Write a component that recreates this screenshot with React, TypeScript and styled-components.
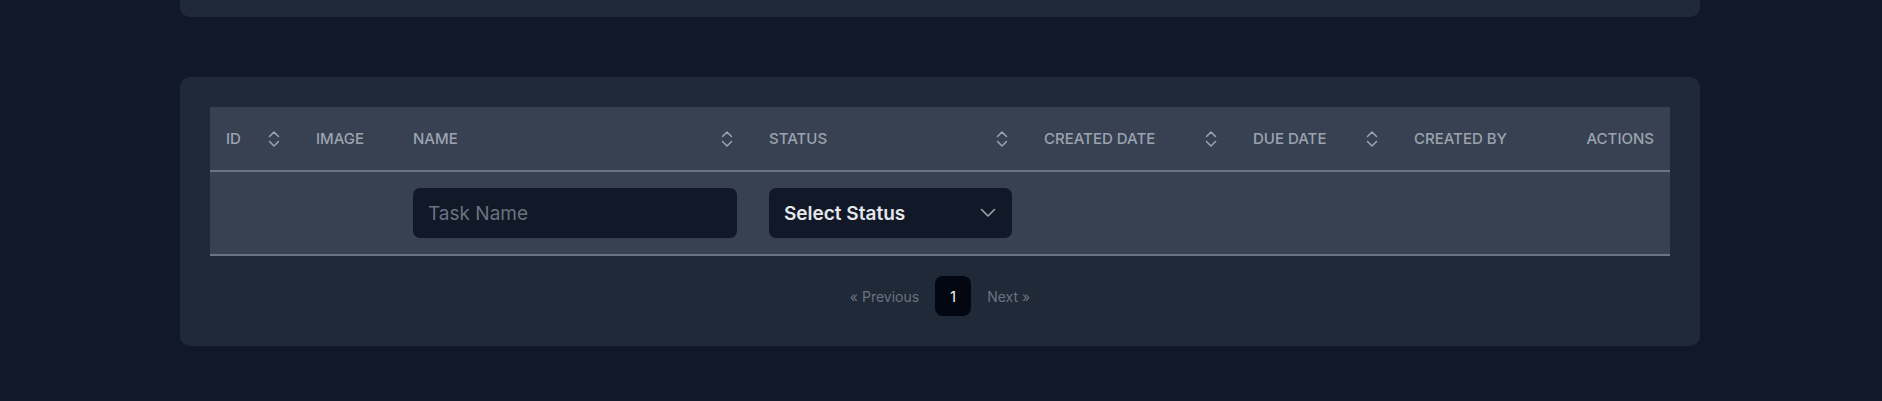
import styled, { createGlobalStyle } from "styled-components";

const GlobalStyle = createGlobalStyle`
  body {
    margin: 0;
    background: #111827;
    font-family: Inter, "Noto Sans", sans-serif;
  }
`;

interface Column {
  label: string;
  width: number;
  sortable?: boolean;
  align?: "left" | "right";
}

const columns: Column[] = [
  { label: "ID", width: 90, sortable: true },
  { label: "Image", width: 97 },
  { label: "Name", width: 356, sortable: true },
  { label: "Status", width: 275, sortable: true },
  { label: "Created Date", width: 209, sortable: true },
  { label: "Due Date", width: 161, sortable: true },
  { label: "Created By", width: 140 },
  { label: "Actions", width: 132, align: "right" },
];

function SortIcon() {
  return (
    <svg width="20" height="20" viewBox="0 0 20 20" fill="none" stroke="currentColor" strokeWidth="1.5" strokeLinecap="round" strokeLinejoin="round">
      <path d="M5.5 7.5 L10 3 L14.5 7.5" />
      <path d="M5.5 12.5 L10 17 L14.5 12.5" />
    </svg>
  );
}

function ChevronDown() {
  return (
    <svg width="16" height="16" viewBox="0 0 16 16" fill="none" stroke="currentColor" strokeWidth="1.6" strokeLinecap="round" strokeLinejoin="round">
      <path d="M1.5 4.5 L8 11 L14.5 4.5" />
    </svg>
  );
}

function App() {
  return (
    <Page>
      <GlobalStyle />
      <TopCard />
      <Card>
        <Table>
          <colgroup>
            {columns.map((c) => (
              <col key={c.label} style={{ width: c.width }} />
            ))}
          </colgroup>
          <thead>
            <HeadRow>
              {columns.map((c) => (
                <HeadCell key={c.label} $align={c.align}>
                  <HeadInner $align={c.align}>
                    <span>{c.label}</span>
                    {c.sortable && <SortIcon />}
                  </HeadInner>
                </HeadCell>
              ))}
            </HeadRow>
          </thead>
          <tbody>
            <FilterRow>
              <FilterCell />
              <FilterCell />
              <FilterCell>
                <TextInput placeholder="Task Name" />
              </FilterCell>
              <FilterCell>
                <SelectBox>
                  <span>Select Status</span>
                  <ChevronDown />
                </SelectBox>
              </FilterCell>
              <FilterCell />
              <FilterCell />
              <FilterCell />
              <FilterCell />
            </FilterRow>
          </tbody>
        </Table>
        <Pagination>
          <PageLink>« Previous</PageLink>
          <PageNumber>1</PageNumber>
          <PageLink>Next »</PageLink>
        </Pagination>
      </Card>
    </Page>
  );
}

const Page = styled.div`
  width: 1520px;
  margin-left: 180px;
  display: flex;
  flex-direction: column;
  gap: 60px;
  padding-bottom: 55px;
`;

const TopCard = styled.div`
  height: 17px;
  background: #1f2937;
  border-radius: 0 0 10px 10px;
`;

const Card = styled.div`
  background: #1f2937;
  border-radius: 10px;
  padding: 30px;
`;

const Table = styled.table`
  width: 100%;
  table-layout: fixed;
  border-collapse: collapse;
  background: #374151;
`;

const HeadRow = styled.tr`
  height: 64px;
  border-bottom: 2px solid #6b7280;
`;

const HeadCell = styled.th<{ $align?: "left" | "right" }>`
  padding: 0 16px;
  text-align: ${(p) => p.$align ?? "left"};
  color: #9ca3af;
  font-size: 15px;
  font-weight: 500;
  text-transform: uppercase;
  white-space: nowrap;
`;

const HeadInner = styled.div<{ $align?: "left" | "right" }>`
  display: flex;
  align-items: center;
  justify-content: ${(p) => (p.$align === "right" ? "flex-end" : "space-between")};

  svg {
    flex-shrink: 0;
    color: #9ca3af;
  }
`;

const FilterRow = styled.tr`
  border-bottom: 2px solid #6b7280;
`;

const FilterCell = styled.td`
  padding: 16px;
`;

const TextInput = styled.input`
  box-sizing: border-box;
  width: 100%;
  height: 50px;
  padding: 0 15px;
  border: none;
  border-radius: 7px;
  background: #111827;
  color: #e5e7eb;
  font-family: Inter, "Noto Sans", sans-serif;
  font-size: 19px;
  outline: none;

  &::placeholder {
    color: #6b7280;
  }
`;

const SelectBox = styled.div`
  box-sizing: border-box;
  height: 50px;
  padding: 0 16px 0 15px;
  border-radius: 7px;
  background: #111827;
  display: flex;
  align-items: center;
  justify-content: space-between;
  color: #e5e7eb;
  font-size: 19px;
  font-weight: 600;

  svg {
    color: #9ca3af;
  }
`;

const Pagination = styled.div`
  margin-top: 20px;
  display: flex;
  justify-content: center;
  align-items: center;
  gap: 16px;
`;

const PageLink = styled.span`
  color: #6b7280;
  font-size: 14px;
`;

const PageNumber = styled.span`
  width: 36px;
  height: 40px;
  border-radius: 8px;
  background: #030712;
  color: #ffffff;
  font-size: 14px;
  display: flex;
  align-items: center;
  justify-content: center;
`;

export default App;
